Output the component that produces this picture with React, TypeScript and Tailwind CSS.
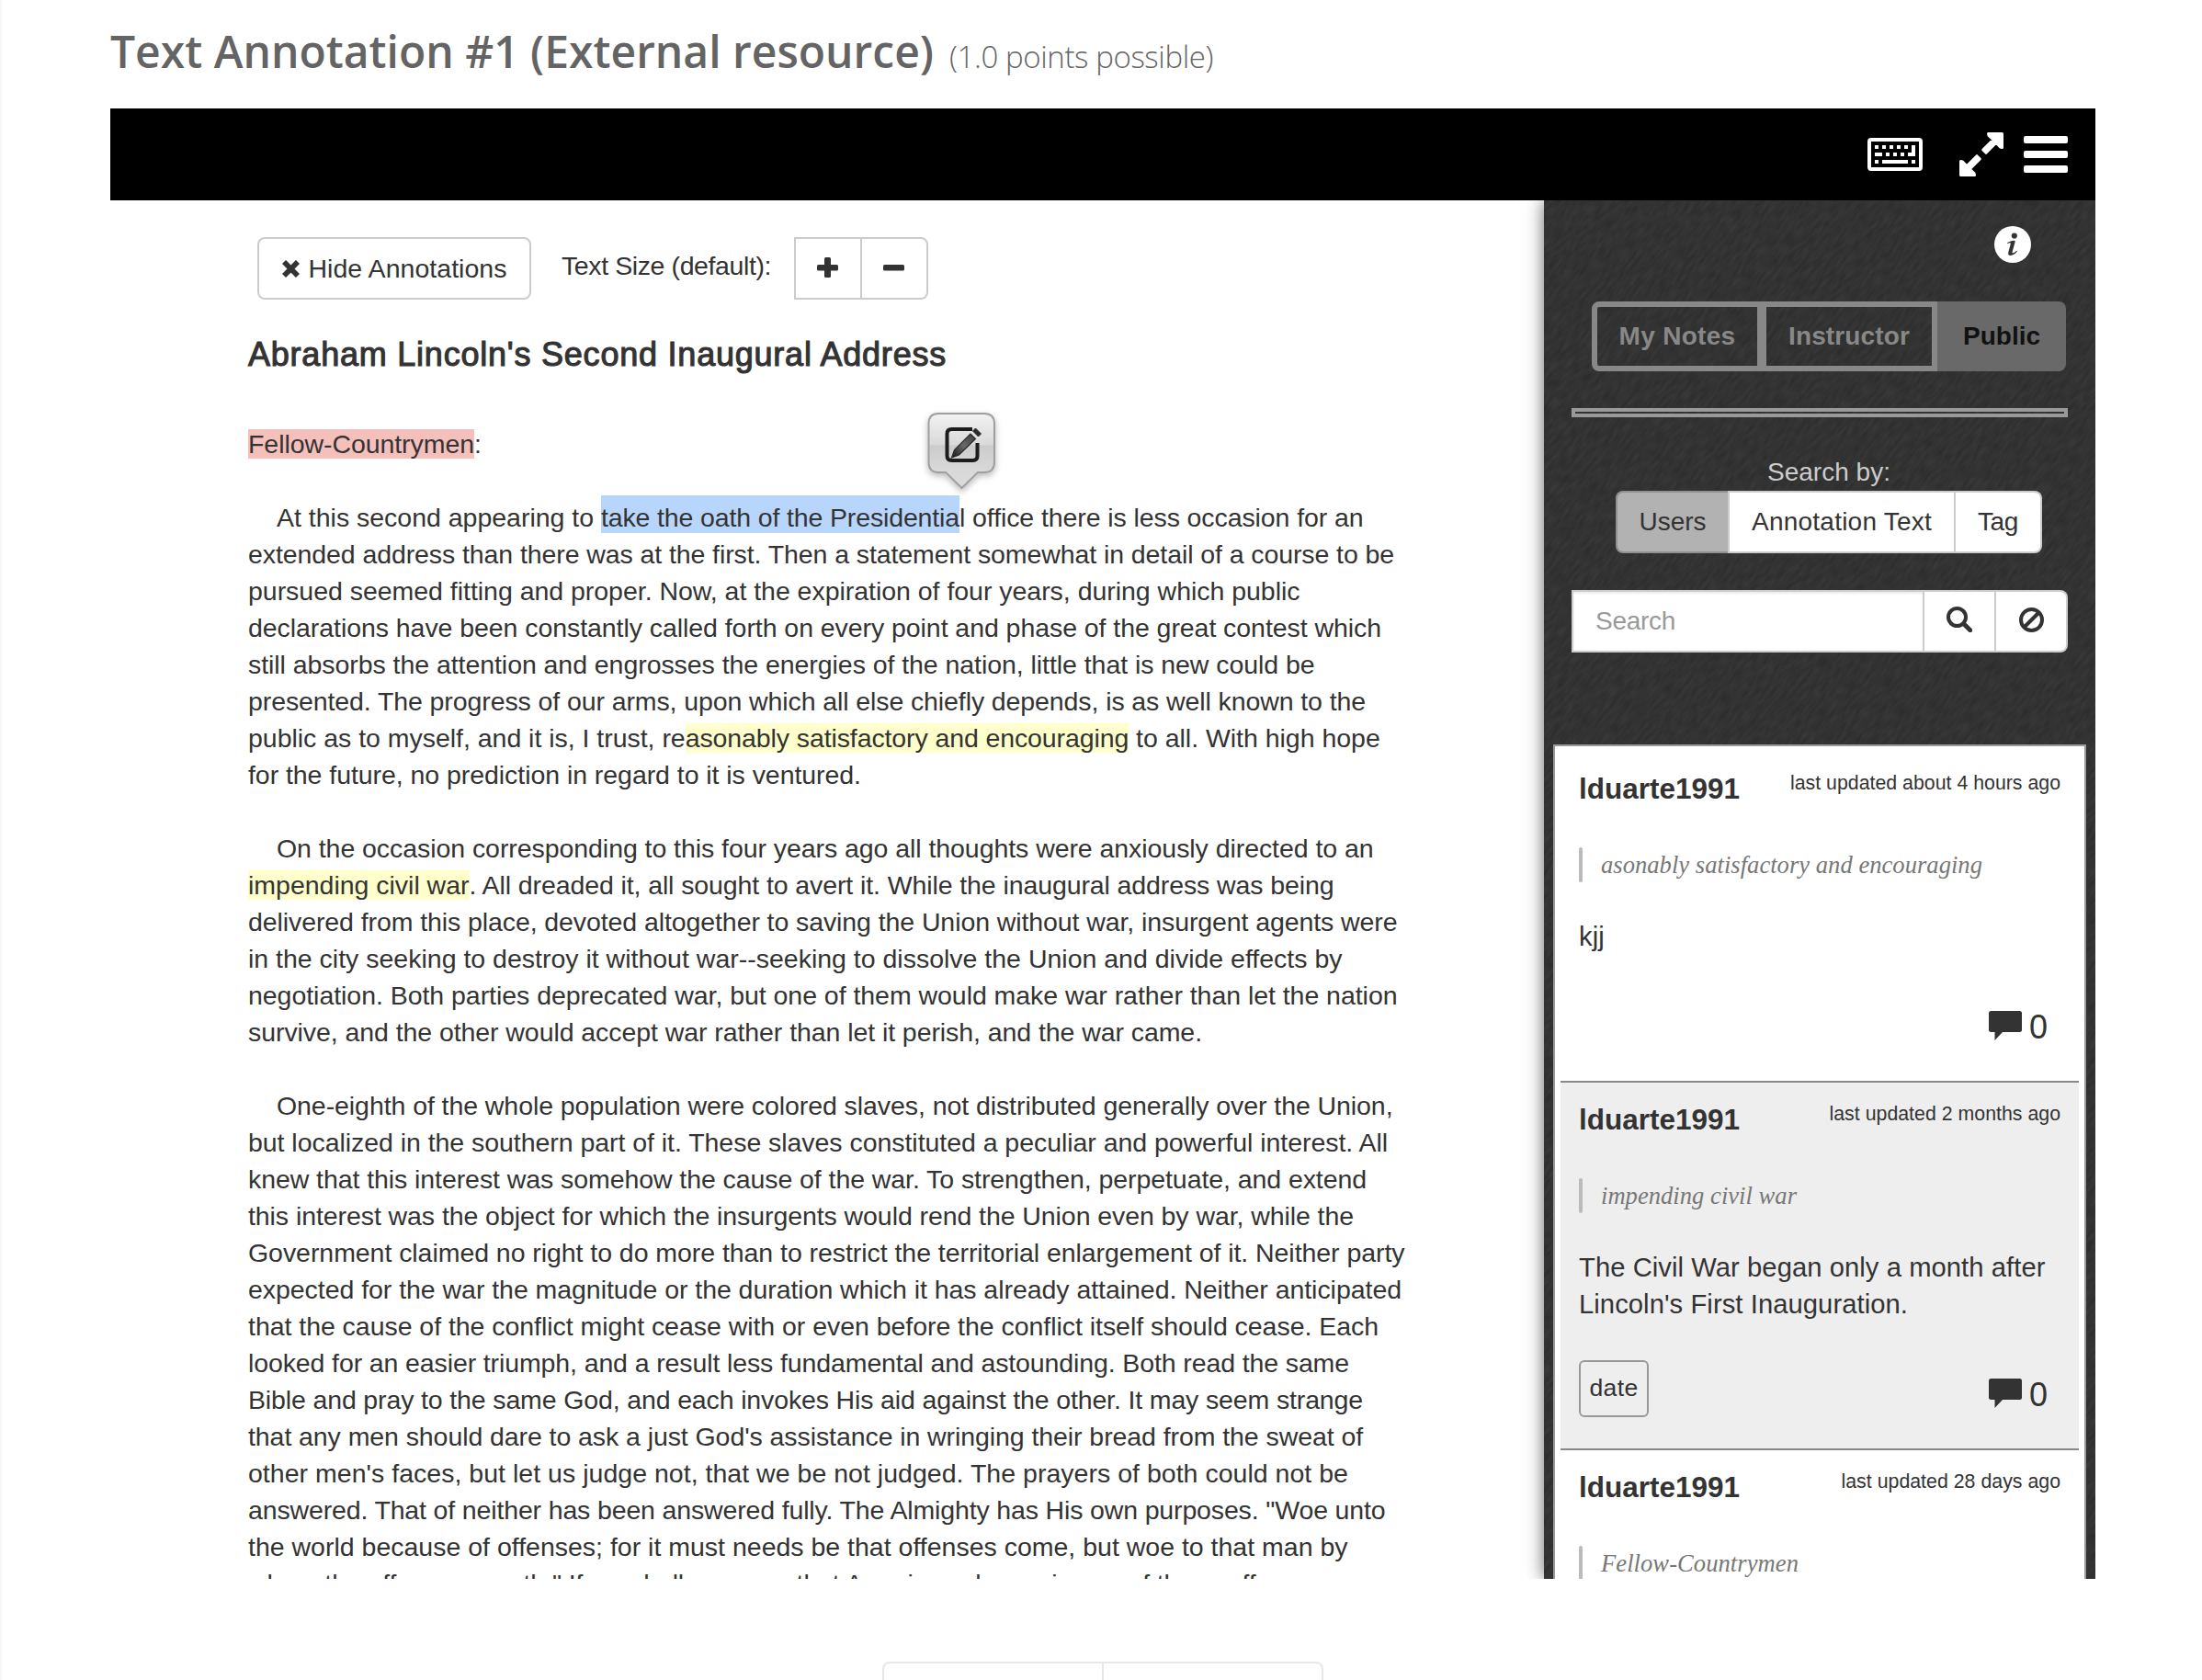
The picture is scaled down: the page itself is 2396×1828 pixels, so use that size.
import { useLayoutEffect, useRef, useState } from "react";
import type { ReactNode } from "react";

/** Inline text whose tracking is adjusted so that it fills the given measure. */
function Fit({ w, className = "", children }: { w: number; className?: string; children: string }) {
  const ref = useRef<HTMLSpanElement>(null);
  const [tracking, setTracking] = useState(0);
  useLayoutEffect(() => {
    if (!ref.current) return;
    const natural = ref.current.getBoundingClientRect().width - tracking * children.length;
    const next = (w - natural) / children.length;
    if (Math.abs(next - tracking) > 0.001) setTracking(next);
  }, [w, children, tracking]);
  return (
    <span ref={ref} className={`whitespace-pre ${className}`} style={{ letterSpacing: `${tracking}px` }}>
      {children}
    </span>
  );
}

type Segment = [text: string, width: number, mark?: "selection" | "yellow" | "pink"];

const markClass = {
  selection: "bg-[#b8d6fb] pt-[8px] pb-[1px]",
  yellow: "bg-[#ffffcc]",
  pink: "bg-[#f5c0bc]",
};

function Line({ segments, indent = false }: { segments: Segment[]; indent?: boolean }) {
  return (
    <div className={`h-10 whitespace-nowrap leading-10 ${indent ? "pl-[31px]" : ""}`}>
      {segments.map(([text, width, mark]) => (
        <Fit key={text} w={width} className={mark ? markClass[mark] : ""}>
          {text}
        </Fit>
      ))}
    </div>
  );
}

const paragraphs: Segment[][][] = [
  [
    [
      ["At this second appearing to ", 353],
      ["take the oath of the Presidentia", 390, "selection"],
      ["l office there is less occasion for an", 439.5],
    ],
    [["extended address than there was at the first. Then a statement somewhat in detail of a course to be", 1247]],
    [["pursued seemed fitting and proper. Now, at the expiration of four years, during which public", 1144.5]],
    [["declarations have been constantly called forth on every point and phase of the great contest which", 1233]],
    [["still absorbs the attention and engrosses the energies of the nation, little that is new could be", 1160.5]],
    [["presented. The progress of our arms, upon which all else chiefly depends, is as well known to the", 1216]],
    [
      ["public as to myself, and it is, I trust, re", 475.7],
      ["asonably satisfactory and encouraging", 482.5, "yellow"],
      [" to all. With high hope", 273.5],
    ],
    [["for the future, no prediction in regard to it is ventured.", 667]],
  ],
  [
    [["On the occasion corresponding to this four years ago all thoughts were anxiously directed to an", 1193.5]],
    [
      ["impending civil war", 240.5, "yellow"],
      [". All dreaded it, all sought to avert it. While the inaugural address was being", 941],
    ],
    [["delivered from this place, devoted altogether to saving the Union without war, insurgent agents were", 1250.5]],
    [["in the city seeking to destroy it without war--seeking to dissolve the Union and divide effects by", 1190.5]],
    [["negotiation. Both parties deprecated war, but one of them would make war rather than let the nation", 1250.5]],
    [["survive, and the other would accept war rather than let it perish, and the war came.", 1038]],
  ],
  [
    [["One-eighth of the whole population were colored slaves, not distributed generally over the Union,", 1214.5]],
    [["but localized in the southern part of it. These slaves constituted a peculiar and powerful interest. All", 1240]],
    [["knew that this interest was somehow the cause of the war. To strengthen, perpetuate, and extend", 1217]],
    [["this interest was the object for which the insurgents would rend the Union even by war, while the", 1203]],
    [["Government claimed no right to do more than to restrict the territorial enlargement of it. Neither party", 1258.5]],
    [["expected for the war the magnitude or the duration which it has already attained. Neither anticipated", 1255]],
    [["that the cause of the conflict might cease with or even before the conflict itself should cease. Each", 1230]],
    [["looked for an easier triumph, and a result less fundamental and astounding. Both read the same", 1198]],
    [["Bible and pray to the same God, and each invokes His aid against the other. It may seem strange", 1213]],
    [["that any men should dare to ask a just God's assistance in wringing their bread from the sweat of", 1213]],
    [["other men's faces, but let us judge not, that we be not judged. The prayers of both could not be", 1197]],
    [["answered. That of neither has been answered fully. The Almighty has His own purposes. \"Woe unto", 1237.5]],
    [["the world because of offenses; for it must needs be that offenses come, but woe to that man by", 1196.5]],
    [["whom the offense cometh.\" If we shall suppose that American slavery is one of those offenses", 1172]],
  ],
];

type Note = { updated: string; updatedW: number; quote: string; quoteW: number; body: [string, number][]; tag?: string };

const notes: Note[] = [
  {
    updated: "last updated about 4 hours ago",
    updatedW: 294,
    quote: "asonably satisfactory and encouraging",
    quoteW: 415,
    body: [["kjj", 28]],
  },
  {
    updated: "last updated 2 months ago",
    updatedW: 251.5,
    quote: "impending civil war",
    quoteW: 213,
    body: [
      ["The Civil War began only a month after", 507.5],
      ["Lincoln's First Inauguration.", 358],
    ],
    tag: "date",
  },
  { updated: "last updated 28 days ago", updatedW: 238.5, quote: "Fellow-Countrymen", quoteW: 215, body: [["", 0]] },
];

function KeyboardIcon() {
  return (
    <svg className="h-9 w-15" viewBox="0 0 60 36" fill="#fff">
      <rect x="2" y="2" width="56" height="32" rx="2" fill="none" stroke="#fff" strokeWidth="4" />
      <path d="M8 8h4v4H8zM16 8h4v4h-4zM24 8h4v4h-4zM32 8h4v4h-4zM40 8h4v4h-4zM48 8h4v12h-8v-4h4zM8 16h8v4H8zM20 16h4v4h-4zM28 16h4v4h-4zM36 16h4v4h-4zM8 24h4v4H8zM16 24h28v4H16zM48 24h4v4h-4z" />
    </svg>
  );
}

function ExpandIcon() {
  return (
    <svg className="size-12" viewBox="0 0 48 48" fill="#fff" stroke="#fff" strokeWidth="3" strokeLinejoin="round">
      <path d="M31.5 1.5H46.5V16.5L44.5 16 40 11.300 29 22.300 25.700 19 36.700 8 32 3.500z" />
      <path d="M16.500 46.500H1.500V31.500L3.500 32 8 36.700 19 25.700 22.300 29 11.300 40 16 44.500z" />
    </svg>
  );
}

function MenuIcon() {
  return (
    <svg className="h-10 w-12" viewBox="0 0 48 40" fill="#fff">
      <rect width="48" height="8" rx="2" />
      <rect y="16" width="48" height="8" rx="2" />
      <rect y="32" width="48" height="8" rx="2" />
    </svg>
  );
}

function InfoIcon() {
  return (
    <svg className="size-10" viewBox="0 0 40 40">
      <circle cx="20" cy="20" r="20" fill="#fff" />
      <circle cx="21.800" cy="10.500" r="3.100" fill="#333" />
      <path
        d="M14 18.300C16.500 16.800 19 16 21.500 15.800C22.600 15.800 22.800 16.500 22.500 17.600L19.600 28.300C19.400 29.300 20 29.500 20.800 29.200C22 28.700 23.200 27.700 24.400 26.700L25 27.300C23.200 30 20.600 32 17.700 32C15.400 32 14.800 30.600 15.300 28.600L17.700 19.600C18 18.400 17.400 18.200 16.600 18.300L14.300 18.900Z"
        fill="#333"
      />
    </svg>
  );
}

function CloseIcon() {
  return (
    <svg className="h-[19px] w-[19px]" viewBox="0 0 19 19" fill="none" stroke="#333" strokeWidth="5.800">
      <path d="M2 2L17 17M17 2L2 17" />
    </svg>
  );
}

function CommentIcon() {
  return (
    <svg className="h-8 w-9" viewBox="0 0 36 32" fill="#333">
      <path d="M2.500 0H33.500Q36 0 36 2.500V20.500Q36 23 33.500 23H15L6.500 32V23H2.500Q0 23 0 20.500V2.500Q0 0 2.500 0Z" />
    </svg>
  );
}

function AnnotateBubble() {
  return (
    <svg className="absolute left-[882px] top-[221px] h-[104px] w-[90px]" viewBox="0 0 90 104">
      <defs>
        <linearGradient id="bubble" x1="0" y1="0" x2="0" y2="1">
          <stop offset="0" stopColor="#f2f2f2" />
          <stop offset="0.42" stopColor="#d9d9d9" />
          <stop offset="0.43" stopColor="#cbcbcb" />
          <stop offset="0.75" stopColor="#d8d8d8" />
          <stop offset="1" stopColor="#dcdcdc" />
        </linearGradient>
        <linearGradient id="pencil" x1="1" y1="0" x2="0" y2="1">
          <stop offset="0" stopColor="#3a3a3a" />
          <stop offset="0.5" stopColor="#6a6a6a" />
          <stop offset="1" stopColor="#111" />
        </linearGradient>
        <filter id="bubbleShadow" x="-20%" y="-20%" width="140%" height="140%">
          <feDropShadow dx="0" dy="3" stdDeviation="3.500" floodColor="#000" floodOpacity="0.28" />
        </filter>
      </defs>
      <path
        d="M19 11H69Q80 11 80 22V64Q80 75 69 75H62L44.500 92L27 75H19Q8.500 75 8.500 64V22Q8.500 11 19 11Z"
        fill="url(#bubble)"
        stroke="#9f9f9f"
        strokeWidth="2"
        filter="url(#bubbleShadow)"
      />
      <path d="M61.500 43V57Q61.500 62 56.500 62H33.500Q28.500 62 28.500 57V33Q28.500 28 33.500 28H56" fill="none" stroke="#1c1c1c" strokeWidth="4" />
      <path d="M33.500 59L36.500 50.500L54 33L59.500 38.500L41.500 56Z" fill="url(#pencil)" stroke="#2a2a2a" strokeWidth="1.200" />
      <path d="M56.500 30L59.500 27L65.500 33L62.500 36Z" fill="#2a2a2a" stroke="#2a2a2a" strokeWidth="1" />
    </svg>
  );
}

/** Dark twill cloth behind the sidebar. */
function Texture() {
  return (
    <svg className="absolute inset-0 h-full w-full" aria-hidden="true">
      <defs>
        <filter id="twill" x="0" y="0" width="100%" height="100%" colorInterpolationFilters="sRGB">
          <feTurbulence type="fractalNoise" baseFrequency="0.07 0.28" numOctaves="2" seed="4" />
          <feColorMatrix values="0.070 0 0 0 0.163  0.070 0 0 0 0.163  0.070 0 0 0 0.163  0 0 0 0 1" />
        </filter>
      </defs>
      <rect width="100%" height="100%" fill="#323232" />
      <g transform="rotate(-50 300 750)">
        <rect x="-700" y="-200" width="2000" height="1900" filter="url(#twill)" />
      </g>
    </svg>
  );
}

function NoteCard({ note, index }: { note: Note; index: number }) {
  const height = index === 0 ? "h-[360px]" : "h-[400px]";
  const look = index === 0 ? "border-transparent" : index === 1 ? "border-[#888] bg-[#eee]" : "border-[#888]";
  return (
    <article className={`flex shrink-0 flex-col border-t-2 px-5 pt-[18px] ${height} ${look}`}>
      <div className="flex h-[86px] items-start justify-between">
        <div className="pt-[2px] text-[31.500px] font-bold leading-10">
          <Fit w={175}>lduarte1991</Fit>
        </div>
        <div className="text-[21.300px] leading-8">
          <Fit w={note.updatedW}>{note.updated}</Fit>
        </div>
      </div>
      <blockquote className="flex h-[38px] shrink-0">
        <span className="w-1 rounded-[2px] bg-[#bbb]" />
        <span className="pl-5 font-['Liberation_Serif',serif] text-[26.6px] italic leading-[38px] text-[#777]">
          <Fit w={note.quoteW}>{note.quote}</Fit>
        </span>
      </blockquote>
      <div className="mt-[39px] shrink-0 pb-px text-[29.200px]">
        {note.body.map(([text, width]) => (
          <div key={text} className="h-10 leading-10">
            {text && <Fit w={width}>{text}</Fit>}
          </div>
        ))}
      </div>
      <div className="mt-10 flex shrink-0 items-start justify-between">
        {note.tag ? (
          <span className="flex h-[62px] w-[76px] items-center justify-center rounded-md border-2 border-[#999] pb-[3px] text-[26.6px] leading-10">
            <Fit w={53}>{note.tag}</Fit>
          </span>
        ) : (
          <span />
        )}
        <span className="mr-3.5 flex gap-2 pt-5">
          <CommentIcon />
          <span className="text-[36px] leading-[36px]">0</span>
        </span>
      </div>
    </article>
  );
}

function Cell({ className, children }: { className: string; children: ReactNode }) {
  return <div className={`flex items-center justify-center ${className}`}>{children}</div>;
}

export default function App() {
  return (
    <div className="flex h-[1828px] w-[2396px] flex-col overflow-hidden border-l-2 border-[#f7f7f7] bg-white pl-[118px] font-['Liberation_Sans',Arial,sans-serif] text-[28.500px] text-[#333]">
      <header className="flex h-[118px] shrink-0 items-baseline pt-[20px] font-['Open_Sans',sans-serif] text-[#646464]">
        <h1 className="text-[48px] font-semibold leading-[72px]">
          <Fit w={896}>Text Annotation #1 (External resource)</Fit>
        </h1>
        <span className="ml-[17px] text-[33px] font-light">
          <Fit w={287}>(1.0 points possible)</Fit>
        </span>
      </header>

      <div className="flex h-[100px] w-[2160px] shrink-0 items-center justify-end bg-black pr-[30px]">
        <KeyboardIcon />
        <span className="ml-10">
          <ExpandIcon />
        </span>
        <span className="ml-[22px]">
          <MenuIcon />
        </span>
      </div>

      <div className="flex h-[1500px] w-[2160px] shrink-0 overflow-hidden">
        <main className="relative w-[1560px] shrink-0 pl-[150px] pt-10">
          <div className="ml-2.5 flex h-[68px] items-start">
            <button className="flex h-[68px] w-[298px] items-center justify-center gap-2.5 rounded-lg border-2 border-[#ccc] leading-10">
              <CloseIcon />
              <Fit w={216}>Hide Annotations</Fit>
            </button>
            <span className="ml-[33px] mt-[11px] w-[253px] leading-10">
              <Fit w={228}>Text Size (default):</Fit>
            </span>
            <Cell className="h-[68px] w-[74px] border-2 border-[#ccc] pb-[3px] pr-px">
              <svg className="h-[22px] w-[23px]" viewBox="0 0 23 22" fill="#333">
                <rect x="8" width="7" height="22" rx="1.500" />
                <rect y="8" width="23" height="6.500" rx="1.500" />
              </svg>
            </Cell>
            <Cell className="h-[68px] w-[72px] rounded-r-lg border-2 border-l-0 border-[#ccc] pb-[3px] pr-px">
              <svg className="h-[22px] w-[23px]" viewBox="0 0 23 22" fill="#333">
                <rect y="8" width="23" height="6.500" rx="1.500" />
              </svg>
            </Cell>
          </div>

          <h2 className="mt-10 h-10 text-[36px] font-normal leading-10 [-webkit-text-stroke:1.1px_#333]">
            <Fit w={760}>Abraham Lincoln's Second Inaugural Address</Fit>
          </h2>

          <div className="mt-[57px]">
            <Line segments={[["Fellow-Countrymen", 246, "pink"], [":", 8]]} />
          </div>

          {paragraphs.map((lines, p) => (
            <div key={p} className="mt-10">
              {lines.map((segments, i) => (
                <Line key={i} segments={segments} indent={i === 0} />
              ))}
            </div>
          ))}
          <AnnotateBubble />
        </main>

        <aside className="relative w-[600px] shrink-0 shadow-[0_0_18px_rgba(0,0,0,0.6)]">
          <Texture />
          <div className="relative flex h-[1500px] flex-col overflow-hidden text-[28px]">
            <div className="mr-[70px] mt-7 flex h-10 shrink-0 justify-end">
              <InfoIcon />
            </div>

            <div className="ml-[52px] mt-[42px] flex h-[76px] shrink-0 font-bold leading-10 text-[#888]">
              <Cell className="w-[185px] rounded-l-lg border-[6px] border-r-[5px] border-[#888]">
                <Fit w={127}>My Notes</Fit>
              </Cell>
              <Cell className="w-[191px] border-[6px] border-l-[5px] border-[#888]">
                <Fit w={132}>Instructor</Fit>
              </Cell>
              <Cell className="w-[140px] rounded-r-lg bg-[#6d6d6d]/95 text-[#111]">
                <Fit w={84}>Public</Fit>
              </Cell>
            </div>

            <div className="ml-[30px] mt-10 h-2.5 w-[540px] shrink-0 border-4 border-[#999]" />

            <div className="ml-5 mt-10 h-10 shrink-0 text-center leading-10 text-[#ccc]">
              <Fit w={134}>Search by:</Fit>
            </div>

            <div className="ml-[78px] flex h-[68px] shrink-0 leading-10">
              <Cell className="w-[122px] rounded-l-lg border-2 border-r-0 border-[#909090] bg-[#b7b7b7]/97">
                <Fit w={73}>Users</Fit>
              </Cell>
              <Cell className="w-[248px] border-2 border-[#ccc] bg-white">
                <Fit w={196}>Annotation Text</Fit>
              </Cell>
              <Cell className="w-[94px] rounded-r-lg border-2 border-l-0 border-[#ccc] bg-white">
                <Fit w={44}>Tag</Fit>
              </Cell>
            </div>

            <div className="ml-[30px] mt-10 flex h-[68px] shrink-0 leading-10 text-[#999]">
              <div className="flex w-[382px] items-center border-2 border-r-0 border-[#ccc] bg-white pl-6 shadow-[inset_0_2px_2px_rgba(0,0,0,0.075)]">
                <Fit w={87}>Search</Fit>
              </div>
              <Cell className="w-20 border-2 border-[#ccc] bg-white pb-1">
                <svg className="size-7" viewBox="0 0 28 28" fill="none" stroke="#333">
                  <circle cx="11.500" cy="11.500" r="9.500" strokeWidth="4" />
                  <path d="M19 19L25.800 25.800" strokeWidth="4.800" strokeLinecap="round" />
                </svg>
              </Cell>
              <Cell className="w-[78px] rounded-r-lg border-2 border-l-0 border-[#ccc] bg-white pb-1">
                <svg className="size-[27px]" viewBox="0 0 27 27" fill="none" stroke="#333" strokeWidth="4">
                  <circle cx="13.500" cy="13.500" r="11.500" />
                  <path d="M5.500 21.500L21.500 5.500" />
                </svg>
              </Cell>
            </div>

            <div className="ml-2.5 mt-[100px] flex h-[908px] w-[580px] shrink-0 flex-col border-2 border-b-0 border-[#999] bg-white px-1.5 pt-1">
              {notes.map((note, i) => (
                <NoteCard key={note.updated} note={note} index={i} />
              ))}
            </div>
          </div>
        </aside>
      </div>

      <div className="ml-[840px] mt-[90px] flex h-20 w-[480px] shrink-0 rounded-lg border-2 border-[#e7e7e7]">
        <div className="w-[239px] border-r-2 border-[#e7e7e7]" />
      </div>
    </div>
  );
}
